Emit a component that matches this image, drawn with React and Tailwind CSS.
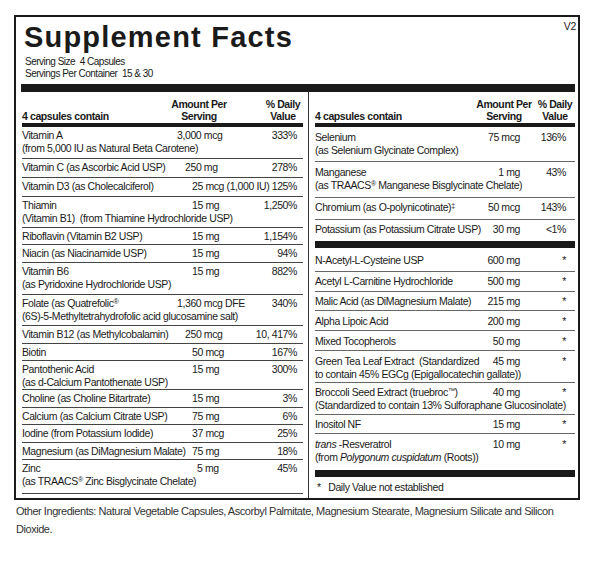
import React from "react";

const LEFT = [
  { n: "Vitamin A", s: "(from 5,000 IU as Natural Beta Carotene)", a: "3,000 mcg", ml: "ml-0", d: "333%", h: "h-[32px]" },
  { n: "Vitamin C (as Ascorbic Acid USP)", a: "250 mg", ml: "ml-[8px]", d: "278%", h: "h-[19px]" },
  { n: "Vitamin D3 (as Cholecalciferol)", a: "25 mcg (1,000 IU)", ml: "ml-[15px]", d: "125%", h: "h-[19px]" },
  { n: "Thiamin", s: "(Vitamin B1)\u00a0\u00a0(from Thiamine Hydrochloride USP)", a: "15 mg", ml: "ml-[15px]", d: "1,250%", h: "h-[31px]" },
  { n: "Riboflavin (Vitamin B2 USP)", a: "15 mg", ml: "ml-[15px]", d: "1,154%", h: "h-[17px]" },
  { n: "Niacin (as Niacinamide USP)", a: "15 mg", ml: "ml-[15px]", d: "94%", h: "h-[18px]" },
  { n: "Vitamin B6", s: "(as Pyridoxine Hydrochloride USP)", a: "15 mg", ml: "ml-[15px]", d: "882%", h: "h-[32px]" },
  { n: <>Folate (as Quatrefolic<sup className="text-[7px]">®</sup></>, s: "(6S)-5-Methyltetrahydrofolic acid glucosamine salt)", a: "1,360 mcg DFE", ml: "ml-0", d: "340%", h: "h-[31px]" },
  { n: "Vitamin B12 (as Methylcobalamin)", a: "250 mcg", ml: "ml-[8px]", d: "10, 417%", h: "h-[18px]" },
  { n: "Biotin", a: "50 mcg", ml: "ml-[15px]", d: "167%", h: "h-[17px]" },
  { n: "Pantothenic Acid", s: "(as d-Calcium Pantothenate USP)", a: "15 mg", ml: "ml-[15px]", d: "300%", h: "h-[29px]" },
  { n: "Choline (as Choline Bitartrate)", a: "15 mg", ml: "ml-[15px]", d: "3%", h: "h-[18px]" },
  { n: "Calcium (as Calcium Citrate USP)", a: "75 mg", ml: "ml-[15px]", d: "6%", h: "h-[17px]" },
  { n: "Iodine (from Potassium Iodide)", a: "37 mcg", ml: "ml-[15px]", d: "25%", h: "h-[18px]" },
  { n: "Magnesium (as DiMagnesium Malate)", a: "75 mg", ml: "ml-[15px]", d: "18%", h: "h-[17px]" },
  { n: "Zinc", s: <>(as TRAACS<sup className="text-[7px]">®</sup> Zinc Bisglycinate Chelate)</>, a: "5 mg", ml: "ml-[20px]", d: "45%", h: "h-[34px]" },
];

const RIGHT_A = [
  { n: "Selenium", s: "(as Selenium Glycinate Complex)", a: "75 mcg", d: "136%", h: "h-[35px]", pt: "pt-[4px]" },
  { n: "Manganese", s: <>(as TRAACS<sup className="text-[7px]">®</sup> Manganese Bisglycinate Chelate)</>, a: "1 mg", d: "43%", h: "h-[36px]", pt: "pt-[4px]" },
  { n: <>Chromium (as O-polynicotinate)<sup className="text-[7px]">‡</sup></>, a: "50 mcg", d: "143%", h: "h-[22px]", pt: "pt-[3px]" },
  { n: "Potassium (as Potassium Citrate USP)", a: "30 mg", d: "<1%", h: "h-[21px]", pt: "pt-[3px]", nb: true },
];

const RIGHT_B = [
  { n: "N-Acetyl-L-Cysteine USP", a: "600 mg", d: "*", h: "h-[24px]", pt: "pt-[6px]" },
  { n: "Acetyl L-Carnitine Hydrochloride", a: "500 mg", d: "*", h: "h-[20px]", pt: "pt-[3px]" },
  { n: "Malic Acid (as DiMagnesium Malate)", a: "215 mg", d: "*", h: "h-[19px]", pt: "pt-[3px]" },
  { n: "Alpha Lipoic Acid", a: "200 mg", d: "*", h: "h-[20px]", pt: "pt-[4px]" },
  { n: "Mixed Tocopherols", a: "50 mg", d: "*", h: "h-[20px]", pt: "pt-[4px]" },
  { n: "Green Tea Leaf Extract\u00a0\u00a0(Standardized", s: "to contain 45% EGCg (Epigallocatechin gallate))", a: "45 mg", d: "*", h: "h-[32px]", pt: "pt-[4px]" },
  { n: <>Broccoli Seed Extract (truebroc<sup className="text-[7px]">™</sup>)</>, s: "(Standardized to contain 13% Sulforaphane Glucosinolate)", a: "40 mg", d: "*", h: "h-[32px]", pt: "pt-[3px]" },
  { n: "Inositol NF", a: "15 mg", d: "*", h: "h-[19px]", pt: "pt-[3px]" },
  { n: <><i>trans</i> -Resveratrol</>, s: <>(from <i>Polygonum cuspidatum</i> (Roots))</>, a: "10 mg", d: "*", h: "h-[36px]", pt: "pt-[4px]", nb: true },
];

function LeftRow({ r }) {
  return (
    <div className={`${r.h} border-b border-[#444] pt-[2px] leading-[13px] text-[10.5px] tracking-[-0.4px]`}>
      <div className="flex whitespace-nowrap">
        <div className="w-[155px] shrink-0">{r.n}</div>
        <div className={r.ml}>{r.a}</div>
        <div className="ml-auto pr-[6px]">{r.d}</div>
      </div>
      {r.s && <div className="whitespace-nowrap">{r.s}</div>}
    </div>
  );
}

function RightRow({ r }) {
  return (
    <div className={`${r.h} ${r.pt} ${r.nb ? "" : "border-b border-[#666]"} leading-[13px] text-[10.5px] tracking-[-0.4px]`}>
      <div className="flex whitespace-nowrap">
        <div className="flex-1 min-w-0">{r.n}</div>
        <div className="w-[70px] shrink-0 text-right">{r.a}</div>
        <div className="w-[55px] shrink-0 pr-[9px] text-right">{r.d}</div>
      </div>
      {r.s && <div className="whitespace-nowrap">{r.s}</div>}
    </div>
  );
}

export default function App() {
  return (
    <div className="w-[600px] h-[568px] bg-white text-[#1a1a1a] font-[family-name:'Liberation_Sans',Arial,sans-serif] overflow-hidden">
      <div className="pt-[15px] pl-[14px]">
        <div className="relative w-[566px] border-2 border-[#1a1a1a] pl-[6px] pr-[3px]">
          <div className="absolute right-[2px] top-[3px] text-[10.5px] leading-[12px] tracking-[-0.3px]">V2</div>
          <div className="pt-[4px] pl-[2px] text-[29px] leading-[32px] font-bold tracking-[1.2px]">
            Supplement Facts
          </div>
          <div className="mt-[3px] mb-[4px] pl-[3px] text-[10px] leading-[12px] tracking-[-0.5px]">
            <div>Serving Size&nbsp; 4 Capsules</div>
            <div>Servings Per Container&nbsp; 15 &amp; 30</div>
          </div>
          <div className="h-[8px] -ml-[1px] bg-[#1a1a1a]" />
          <div className="flex">
            <div className="w-[281px] shrink-0 pb-[4px]">
              <div className="flex items-end whitespace-nowrap border-b-4 border-[#1a1a1a] pt-[6px] pb-[1px] pr-[2px] text-[10.5px] leading-[12px] font-bold tracking-[-0.4px]">
                <div className="flex-1">4 capsules contain</div>
                <div className="w-[66px] text-center">Amount Per<br />Serving</div>
                <div className="ml-[33px] w-[36px] text-center">% Daily<br />Value</div>
              </div>
              {LEFT.map((r, i) => (
                <LeftRow key={i} r={r} />
              ))}
            </div>
            <div className="flex-1 min-w-0 ml-[5px] border-l border-[#333] pl-[6px] flex flex-col">
              <div className="flex items-end whitespace-nowrap border-b-4 border-[#1a1a1a] pt-[6px] pb-[1px] pr-[2px] text-[10.5px] leading-[12px] font-bold tracking-[-0.4px]">
                <div className="flex-1 min-w-0">4 capsules contain</div>
                <div className="w-[66px] shrink-0 text-center">Amount Per<br />Serving</div>
                <div className="w-[36px] shrink-0 text-center">% Daily<br />Value</div>
              </div>
              {RIGHT_A.map((r, i) => (
                <RightRow key={i} r={r} />
              ))}
              <div className="h-[7px] bg-[#1a1a1a]" />
              {RIGHT_B.map((r, i) => (
                <RightRow key={i} r={r} />
              ))}
              <div className="h-[7px] bg-[#1a1a1a]" />
              <div className="flex-1 pt-[4px] pl-[2px] text-[10.5px] leading-[13px] tracking-[-0.4px]">*&nbsp;&nbsp; Daily Value not established</div>
            </div>
          </div>
        </div>
        <div className="mt-[2px] pl-[2px] text-[11px] leading-[18px] tracking-[-0.45px] text-[#333]">
          <div className="whitespace-nowrap">Other Ingredients: Natural Vegetable Capsules, Ascorbyl Palmitate, Magnesium Stearate, Magnesium Silicate and Silicon</div>
          <div>Dioxide.</div>
        </div>
      </div>
    </div>
  );
}
